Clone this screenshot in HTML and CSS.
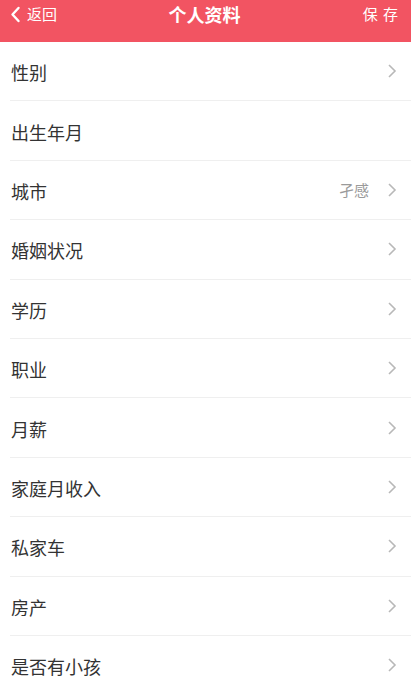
FILE: index.html
```html
<!DOCTYPE html>
<html lang="zh">
<head>
<meta charset="utf-8">
<link rel="stylesheet" href="styles.css">
</head>
<body>
<header class="topbar">
  <div class="back">
    <svg class="back-icon" width="11" height="17" viewBox="0 0 11 17"><path d="M8.5 2 L2.5 8.5 L8.5 15" fill="none" stroke="#fff" stroke-width="2.4" stroke-linecap="round" stroke-linejoin="round"/></svg>
    <span>返回</span>
  </div>
  <div class="title">个人资料</div>
  <div class="save">保 存</div>
</header>
<ul class="list">
  <li class="row"><span class="label">性别</span><span class="right"><svg class="chev" width="10" height="16" viewBox="0 0 10 16"><path d="M2 2 L8 8 L2 14" fill="none" stroke="#b8b8b8" stroke-width="1.6"/></svg></span></li>
  <li class="row"><span class="label">出生年月</span><span class="right"></span></li>
  <li class="row"><span class="label">城市</span><span class="right"><span class="value">孑感</span><svg class="chev" width="10" height="16" viewBox="0 0 10 16"><path d="M2 2 L8 8 L2 14" fill="none" stroke="#b8b8b8" stroke-width="1.6"/></svg></span></li>
  <li class="row"><span class="label">婚姻状况</span><span class="right"><svg class="chev" width="10" height="16" viewBox="0 0 10 16"><path d="M2 2 L8 8 L2 14" fill="none" stroke="#b8b8b8" stroke-width="1.6"/></svg></span></li>
  <li class="row"><span class="label">学历</span><span class="right"><svg class="chev" width="10" height="16" viewBox="0 0 10 16"><path d="M2 2 L8 8 L2 14" fill="none" stroke="#b8b8b8" stroke-width="1.6"/></svg></span></li>
  <li class="row"><span class="label">职业</span><span class="right"><svg class="chev" width="10" height="16" viewBox="0 0 10 16"><path d="M2 2 L8 8 L2 14" fill="none" stroke="#b8b8b8" stroke-width="1.6"/></svg></span></li>
  <li class="row"><span class="label">月薪</span><span class="right"><svg class="chev" width="10" height="16" viewBox="0 0 10 16"><path d="M2 2 L8 8 L2 14" fill="none" stroke="#b8b8b8" stroke-width="1.6"/></svg></span></li>
  <li class="row"><span class="label">家庭月收入</span><span class="right"><svg class="chev" width="10" height="16" viewBox="0 0 10 16"><path d="M2 2 L8 8 L2 14" fill="none" stroke="#b8b8b8" stroke-width="1.6"/></svg></span></li>
  <li class="row"><span class="label">私家车</span><span class="right"><svg class="chev" width="10" height="16" viewBox="0 0 10 16"><path d="M2 2 L8 8 L2 14" fill="none" stroke="#b8b8b8" stroke-width="1.6"/></svg></span></li>
  <li class="row"><span class="label">房产</span><span class="right"><svg class="chev" width="10" height="16" viewBox="0 0 10 16"><path d="M2 2 L8 8 L2 14" fill="none" stroke="#b8b8b8" stroke-width="1.6"/></svg></span></li>
  <li class="row"><span class="label">是否有小孩</span><span class="right"><svg class="chev" width="10" height="16" viewBox="0 0 10 16"><path d="M2 2 L8 8 L2 14" fill="none" stroke="#b8b8b8" stroke-width="1.6"/></svg></span></li>
</ul>
</body>
</html>
```
FILE: styles.css
```css
* { box-sizing: border-box; }
html, body {
  margin: 0;
  padding: 0;
  background: #fff;
  font-family: "Noto Sans CJK SC", "Noto Sans", sans-serif;
  overflow: hidden;
}
.topbar {
  height: 42px;
  background: #f25462;
  color: #fff;
  display: grid;
  grid-template-columns: 1fr auto 1fr;
  align-items: start;
  padding: 2px 12px 0 10px;
}
.back {
  display: flex;
  align-items: center;
  gap: 6px;
  font-size: 15px;
  line-height: 24px;
}
.back-icon { display: block; }
.title {
  font-size: 18px;
  font-weight: 700;
  line-height: 24px;
}
.save {
  justify-self: end;
  font-size: 15px;
  line-height: 24px;
  letter-spacing: 1px;
}
.list {
  list-style: none;
  margin: 0;
  padding: 0;
}
.row {
  height: 59.4px;
  margin-left: 10px;
  padding-right: 14px;
  border-bottom: 1px solid #efefef;
  display: flex;
  align-items: center;
  justify-content: space-between;
}
.label {
  font-size: 18px;
  color: #333;
  padding-left: 1px;
  padding-top: 2px;
}
.right {
  display: flex;
  align-items: center;
  gap: 18px;
}
.value {
  font-size: 15px;
  color: #9a9a9a;
}
.chev { display: block; }
```
